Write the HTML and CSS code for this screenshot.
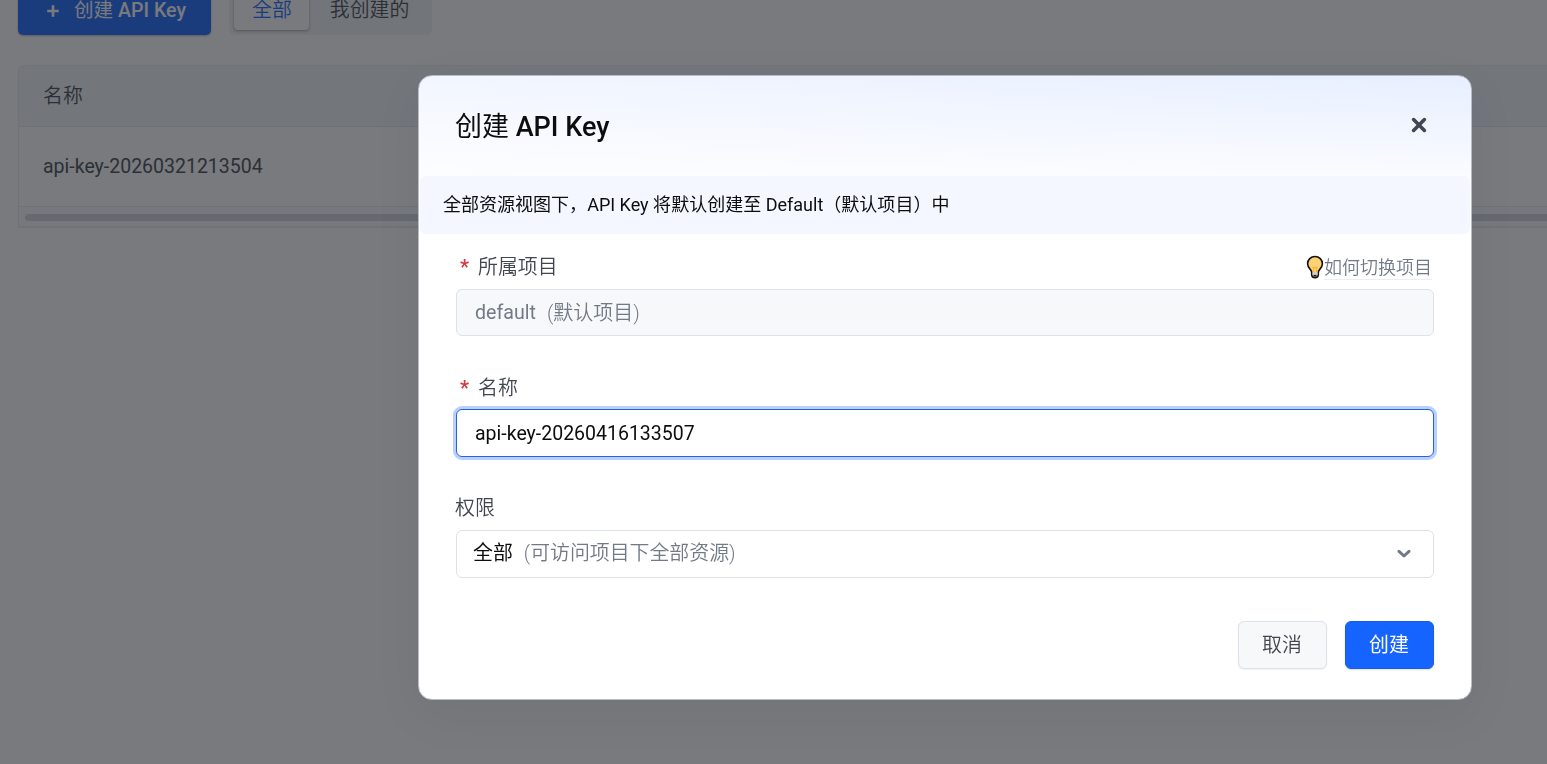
FILE: index.html
```
<!DOCTYPE html>
<html lang="zh-CN">
<head>
<meta charset="utf-8">
<title>API Key</title>
<link rel="stylesheet" href="styles.css">
</head>
<body>
<main class="page">
  <div class="toolbar">
    <button class="btn-new">
      <svg class="plus" viewBox="0 0 14 14"><path d="M7 1.2v11.6M1.2 7h11.6"/></svg>
      <span><span class="cjk">创建</span> API Key</span>
    </button>
    <div class="tabs">
      <span class="tab tab-active">全部</span>
      <span class="tab">我创建的</span>
    </div>
  </div>
  <div class="table">
    <div class="table-head">名称</div>
    <div class="table-row">api-key-20260321213504</div>
    <div class="scroll-track"><div class="scroll-thumb"></div></div>
  </div>
</main>
<div class="overlay">
  <section class="modal">
    <header class="modal-head">
      <h2 class="modal-title"><span class="cjk">创建</span> API Key</h2>
      <svg class="close" viewBox="0 0 16 16"><path d="M2.6 2.6l10.8 10.8M13.4 2.6L2.6 13.4"/></svg>
    </header>
    <div class="notice">全部资源视图下，API Key 将默认创建至 Default（默认项目）中</div>
    <div class="form">
      <div class="label-row label-project">
        <span class="label"><span class="star">*</span>所属项目</span>
        <span class="help">
          <svg class="bulb" viewBox="0 0 18 24">
            <path d="M9 1.5C4.8 1.5 1.6 4.6 1.6 8.7c0 2.7 1.3 4.4 2.8 5.9.9.9 1.2 1.8 1.3 3v2.2c0 1.6 1.3 2.8 3.3 2.8s3.3-1.2 3.3-2.8v-2.2c.1-1.2.4-2.1 1.3-3 1.5-1.5 2.8-3.2 2.8-5.9C16.4 4.6 13.2 1.5 9 1.5z" fill="#ffd176" stroke="#15110d" stroke-width="1.6"/>
            <path d="M6.6 12l1.1 1.1 1.3-1.1 1.3 1.1 1.1-1.1M7.6 13v4M10.4 13v4" fill="none" stroke="#f5b52b" stroke-width="1.1"/>
            <path d="M6.5 17.3h5v2.2c0 1.2-1 2-2.5 2s-2.5-.8-2.5-2z" fill="#c9cdd4"/>
            <path d="M7.6 20.7h2.8" stroke="#15110d" stroke-width="1.6"/>
          </svg>
          <span class="help-text">如何切换项目</span>
        </span>
      </div>
      <div class="field field-disabled"><span>default</span><span class="paren">(默认项目)</span></div>
      <div class="label-row label-name"><span class="label"><span class="star">*</span>名称</span></div>
      <div class="field field-focus">api-key-20260416133507</div>
      <div class="label-row label-scope"><span class="label">权限</span></div>
      <div class="field field-select">
        <span class="choice">全部</span>
        <span class="hint">(可访问项目下全部资源)</span>
        <svg class="chevron" viewBox="0 0 14 10"><path d="M2 2.3l5 4.7 5-4.7"/></svg>
      </div>
    </div>
    <footer class="actions">
      <button class="btn btn-cancel">取消</button>
      <button class="btn btn-create">创建</button>
    </footer>
  </section>
</div>
</body>
</html>
```
FILE: styles.css
```
* { box-sizing: border-box; }
body {
  margin: 0;
  height: 764px;
  overflow: hidden;
  background: #fff;
  color: #41464f;
  font: 350 19.9px/28px Roboto, "Noto Sans CJK SC", sans-serif;
}
button { font: inherit; }
.cjk { font-weight: 400; }
.page { padding-left: 18px; height: 764px; overflow: hidden; }
.toolbar { display: flex; gap: 18px; height: 48px; margin-top: -13px; }
.btn-new {
  width: 193px;
  display: flex;
  align-items: center;
  padding: 0 0 0 28px;
  gap: 14px;
  border: 0;
  border-radius: 5px;
  background: #1664ff;
  color: #fff;
  font-size: 19.6px;
  font-weight: 500;
  box-shadow: 0 1px 2px rgba(0, 0, 0, .3);
  white-space: nowrap;
}
.plus { width: 14px; height: 14px; fill: none; stroke: #fff; stroke-width: 2.7; }
.tabs { width: 203px; display: flex; padding: 4px 4px 5px 5px; border-radius: 6px; background: #f0f2f8; }
.tab { padding: 5px 21px; white-space: nowrap; line-height: 30px; }
.tab:first-child { width: 75px; padding: 5px 17px 5px 18px; }
.tab-active { border-radius: 4px; background: #fff; color: #1664ff; box-shadow: 0 1px 3px rgba(0, 0, 0, .35); }
.table { margin-top: 30px; width: 1600px; border: 1px solid #e8eaf0; border-radius: 6px 6px 0 0; border-bottom-width: 2px; }
.table-head { height: 61px; padding: 17px 24px; background: #f3f4fb; border-bottom: 1px solid #e3e5ec; border-radius: 5px 5px 0 0; }
.table-row { height: 80px; padding: 26px 24px; border-bottom: 1px solid #e8eaf0; font-size: 19.5px; font-weight: 400; }
.scroll-track { height: 19px; padding: 7px 6px; background: #fafbff; }
.scroll-thumb { height: 7px; border-radius: 4px; background: #d3d6de; }

.overlay { position: fixed; inset: 0; padding: 75px 0 0 418px; background: rgba(30, 34, 39, .6); }
.modal {
  width: 1054px;
  height: 625px;
  border: 1px solid #b9bcc2;
  border-radius: 14px;
  background: linear-gradient(to bottom, rgba(255, 255, 255, 0), #fff 125px), linear-gradient(100deg, #f2f6ff, #e6eeff);
  box-shadow: 0 14px 50px rgba(0, 0, 0, .06);
  overflow: hidden;
}
.modal-head { height: 100px; padding: 0 44px 0 36px; display: flex; align-items: center; justify-content: space-between; }
.modal-title { margin: 1px 0 0; color: #0c0d0e; font-size: 27px; line-height: 36px; font-weight: 500; }
.close { width: 16px; height: 16px; margin-top: -2px; fill: none; stroke: #42464e; stroke-width: 3.6; stroke-linecap: round; }
.notice { height: 58px; margin: 0 1px; padding: 15px 23px; border-radius: 6px; background: #f4f7ff; color: #0c0d0e; font-size: 18.03px; font-weight: 400; white-space: nowrap; }
.form { padding: 0 37px; }
.label-row { display: flex; justify-content: space-between; align-items: center; height: 28px; }
.label-project { margin-top: 20px; }
.label-name { margin-top: 39px; }
.label-scope { margin-top: 38px; }
.label { margin-left: -1px; }
.star { display: inline-block; width: 18px; margin-left: 5px; color: #db373f; font-weight: 700; }
.help { display: flex; align-items: center; font-size: 18px; color: #737a87; }
.bulb { width: 18px; height: 24px; margin-top: -2px; }
.help-text { line-height: 23px; border-bottom: 1px solid #eaedf1; margin-right: 2px; }
.field { display: flex; align-items: center; border: 1px solid #dde2e9; border-radius: 6px; padding: 0 17px; font-weight: 400; }
.field-disabled { margin-top: 7px; height: 47px; padding-left: 18px; background: #f6f8fa; color: #737a87; font-size: 19.6px; }
.paren { margin-left: 11px; font-size: 20px; font-weight: 350; }
.field-focus { margin-top: 6px; height: 48px; padding: 1px 17px 0 18px; border-color: #2563db; background: #fff; color: #0c0d0e; font-size: 19.5px; box-shadow: 0 0 0 3px #b9d0ff; }
.field-select { margin-top: 7px; height: 48px; color: #0c0d0e; background: #fff; }
.choice { margin-left: -1px; }
.hint { margin-left: 11px; color: #737a87; font-weight: 350; }
.chevron { width: 14px; height: 10px; margin: 0 5px 0 auto; fill: none; stroke: #737a87; stroke-width: 3; stroke-linecap: round; stroke-linejoin: round; }
.actions { display: flex; justify-content: flex-end; gap: 18px; padding: 43px 37px 0; }
.btn { width: 89px; height: 48px; padding: 1px 1px 0 0; border-radius: 6px; }
.btn-cancel { border: 1px solid #dde2e9; background: #f6f8fa; color: #41464f; box-shadow: 0 1px 2px rgba(0, 0, 0, .06); }
.btn-create { border: 1px solid #1a5ce6; background: #1664ff; color: #fff; font-weight: 400; box-shadow: 0 1px 2px rgba(0, 0, 0, .12); }
```
